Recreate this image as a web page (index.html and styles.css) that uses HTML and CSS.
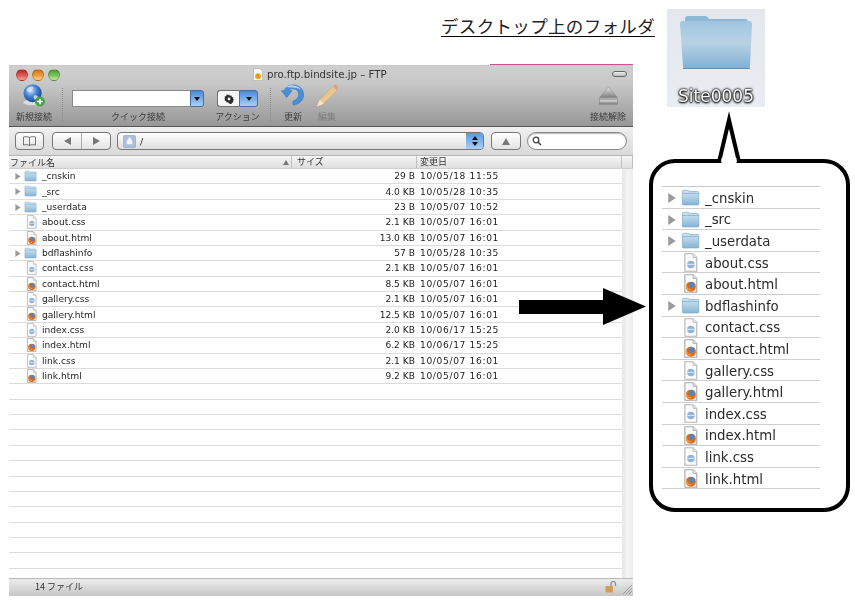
FILE: index.html
```html
<!DOCTYPE html>
<html lang="ja">
<head>
<meta charset="utf-8">
<title>FTP</title>
<link rel="stylesheet" href="styles.css">
</head>
<body>
<svg class="sprite" aria-hidden="true">
  <defs>
    <linearGradient id="fg" x1="0" y1="0" x2="0" y2="1"><stop offset="0" stop-color="#d6e7f2"/><stop offset="1" stop-color="#84b5d6"/></linearGradient>
    <linearGradient id="fbig" x1="0" y1="0" x2="0" y2="1"><stop offset="0" stop-color="#9fc5e0"/><stop offset=".45" stop-color="#b8d2e4"/><stop offset="1" stop-color="#7fb0d3"/></linearGradient>
    <radialGradient id="globe" cx=".4" cy=".35" r=".7"><stop offset="0" stop-color="#cfe4fa"/><stop offset=".5" stop-color="#3e7fd0"/><stop offset="1" stop-color="#123f95"/></radialGradient>
    <linearGradient id="ej" x1="0" y1="0" x2="0" y2="1"><stop offset="0" stop-color="#e4e4e4"/><stop offset="1" stop-color="#7c7c7c"/></linearGradient>
    <symbol id="folder" viewBox="0 0 14 12">
      <path d="M1 1.600C1 1 1.400.7 2 .7h3.200c.5 0 .8.3 1 .9h6.100c.5 0 .8.3.8.8v8.300c0 .5-.3.8-.8.8H1.800c-.5 0-.8-.3-.8-.8z" fill="url(#fg)" stroke="#7ea6c4" stroke-width=".5"/>
      <path d="M1.200 3h11.700" stroke="#7aa8ca" stroke-width=".5"/>
    </symbol>
    <symbol id="css" viewBox="0 0 12 15">
      <path d="M1.500.5h6.500l3 3v11h-9.500z" fill="#fbfbfb" stroke="#b5b5b5" stroke-width=".9"/>
      <path d="M8 .5v3h3" fill="#e6e6e6" stroke="#b5b5b5" stroke-width=".6"/>
      <circle cx="6.300" cy="9" r="3" fill="#8fb4d8"/>
      <path d="M3.300 9h6" stroke="#dfe9f2" stroke-width=".8"/>
    </symbol>
    <symbol id="html" viewBox="0 0 12 15">
      <path d="M1.500.5h6.500l3 3v11h-9.500z" fill="#fbfbfb" stroke="#a8a8a8" stroke-width=".9"/>
      <path d="M8 .5v3h3" fill="#e6e6e6" stroke="#a8a8a8" stroke-width=".6"/>
      <circle cx="6.300" cy="10" r="4" fill="#e56a17"/>
      <circle cx="6.900" cy="8.700" r="2.400" fill="#4f86c4"/>
      <path d="M2.600 9c.3 2.400 2 3.700 4 3.500" stroke="#f6a53a" stroke-width=".9" fill="none"/>
    </symbol>
    <symbol id="doc-title" viewBox="0 0 10 13">
      <path d="M.5.5h6.500l2.500 2.500v9.500h-9z" fill="#f8f8f8" stroke="#aaa" stroke-width=".6"/>
      <circle cx="5" cy="8.200" r="3" fill="#eda81f"/>
      <path d="M4 6.300c1.200.1 2 1 1.800 2.200-.2.800-1.300.9-1.800.4.600 0 1-.2 1-.8s-.8-1-1-1.800z" fill="#c8761a"/>
    </symbol>
    <symbol id="chev" viewBox="0 0 6 8"><path d="M0 0l6 4-6 4z" fill="#9a9a9a"/></symbol>
  </defs>
</svg>

<h1 class="caption">デスクトップ上のフォルダ</h1>

<div class="desktop-tile">
  <svg class="big-folder" viewBox="0 0 74 58">
    <path d="M6 6c0-2 1-3 3-3h17c2 0 3 1 4 3h36c2 0 3 1 3 3v5H6z" fill="#8fb8d8"/>
    <path d="M1 11c0-2 1-3 3-3h66c2 0 3 1 3 3l-2 42c0 2-1 3-3 3H7c-2 0-3-1-3-3z" fill="url(#fbig)"/>
    <path d="M4 55.500h67" stroke="#5f8fb4" stroke-width="1.200"/>
  </svg>
  <span class="tile-label">Site0005</span>
</div>

<main class="window">
  <header class="titlebar">
    <div class="lights"><i class="light red"></i><i class="light amber"></i><i class="light green"></i></div>
    <div class="title"><svg class="title-icon"><use href="#doc-title"/></svg><span>pro.ftp.bindsite.jp – FTP</span></div>
    <i class="pill"></i>
  </header>

  <div class="toolbar">
    <div class="tool tool-new">
      <svg class="tool-icon" viewBox="0 0 26 26">
        <ellipse cx="11" cy="20.500" rx="10" ry="3.500" fill="#ddd" stroke="#999" stroke-width=".5"/>
        <circle cx="11.500" cy="10.500" r="9.800" fill="url(#globe)"/>
        <path d="M5 7c2-3 5-4 7-3 1 2-2 2-2 4s-3 2-5-1zm8 6c2-1 5 0 4 2s-3 3-4 2 0-3 0-4z" fill="#dfeaf6" opacity=".8"/>
        <circle cx="19.500" cy="19.500" r="5.500" fill="#4aa34a"/>
        <path d="M19.500 16.500v6M16.500 19.500h6" stroke="#fff" stroke-width="1.800"/>
      </svg>
      <span>新規接続</span>
    </div>
    <i class="tool-sep sep-a"></i>
    <div class="tool tool-quick">
      <div class="combo"><i class="combo-field"></i><i class="blue-btn"><b class="down"></b></i></div>
      <span>クイック接続</span>
    </div>
    <div class="tool tool-action">
      <div class="action">
        <i class="gear-box">
          <svg class="gear" viewBox="0 0 12 12">
            <path d="M6 .5l1 1.700 1.900-.5.500 1.900 1.900.5-.5 1.900 1.200 1-1.200 1 .5 1.900-1.900.5-.5 1.900-1.900-.5L6 11.500l-1-1.700-1.900.5-.5-1.900-1.900-.5.5-1.900L0 6l1.200-1-.5-1.900 1.900-.5.5-1.900 1.900.5z" fill="#2a2a2a"/>
            <circle cx="6" cy="6" r="1.700" fill="#f4f4f4"/>
          </svg>
        </i>
        <i class="blue-btn wide"><b class="down"></b></i>
      </div>
      <span>アクション</span>
    </div>
    <i class="tool-sep sep-b"></i>
    <div class="tool tool-refresh">
      <svg class="tool-icon" viewBox="0 0 24 26">
        <path d="M12 2C7 2 4 4.500 3 8l-3 0 5.500 7L11 8 7.500 8C8.500 6.500 10 6 12 6c3.500 0 6 2.500 6 6 0 3-2 5.500-6 7l0 4c7-1 11-5.500 11-11C23 6 18 2 12 2z" fill="#4a8fd6" stroke="#2f6fb2" stroke-width=".6"/>
        <path d="M5 4.500C7 2.800 9.500 2.300 12 2.500c4 .2 7 2 8.500 4.500-3-2-8-3-15.500-2.500z" fill="#b4d5f2"/>
      </svg>
      <span>更新</span>
    </div>
    <div class="tool tool-edit">
      <svg class="tool-icon" viewBox="0 0 26 26">
        <path d="M2 25l3-7.500L19.500 3 24 7.500 9.500 22z" fill="#e6c890" stroke="#ba9f70" stroke-width=".6"/>
        <path d="M19.500 3l1.500-1.500c.9-.8 1.900-.7 2.600 0l.9.900c.7.800.7 1.700 0 2.600L24 7.500z" fill="#e59a9a"/>
        <path d="M2 25l3-7.500L9.500 22z" fill="#f2e6d2"/>
      </svg>
      <span class="dim">編集</span>
    </div>
    <div class="tool tool-eject">
      <svg class="eject-icon" viewBox="0 0 22 22">
        <path d="M11 1L21 13H1z" fill="url(#ej)" stroke="#888" stroke-width=".5"/>
        <rect x="1" y="15" width="20" height="5" fill="url(#ej)" stroke="#777" stroke-width=".5"/>
      </svg>
      <span>接続解除</span>
    </div>
  </div>

  <div class="addressbar">
    <button class="btn btn-book" type="button" aria-label="book">
      <svg class="book" viewBox="0 0 14 10"><path d="M7 1.500C5.500.5 3 .5 1 1v8c2-.5 4.500-.5 6 .5 1.500-1 4-1 6-.5V1c-2-.5-4.500-.5-6 .5zM7 1.500v8" fill="none" stroke="#555" stroke-width=".8"/></svg>
    </button>
    <div class="btn nav">
      <span class="nav-half"><i class="tri-left"></i></span>
      <span class="nav-half"><i class="tri-right"></i></span>
    </div>
    <div class="path">
      <svg class="disk" viewBox="0 0 14 14"><rect x=".5" y=".5" width="13" height="13" rx="1.500" fill="#aebfdc" stroke="#8899b8" stroke-width=".6"/><path d="M7 2l3 4.500v3.500H4V6.500z" fill="#f2f5fa"/></svg>
      <span class="path-text">/</span>
      <i class="stepper"><b class="up"></b><b class="down"></b></i>
    </div>
    <button class="btn btn-up" type="button" aria-label="up"><i class="tri-up"></i></button>
    <div class="search">
      <svg class="lens" viewBox="0 0 10 10"><circle cx="4" cy="4" r="2.800" fill="none" stroke="#444" stroke-width="1.300"/><path d="M6 6l3 3" stroke="#444" stroke-width="1.500"/></svg>
    </div>
  </div>

  <div class="headers">
    <div class="col-h h-name"><span>ファイル名</span><i class="sort"></i></div>
    <div class="col-h h-size">サイズ</div>
    <div class="col-h h-date">変更日</div>
    <div class="col-h h-end"></div>
  </div>

  <div class="content">
    <div class="rows">
      <div class="row"><svg class="chev"><use href="#chev"/></svg><svg class="ic-folder"><use href="#folder"/></svg><span class="name">_cnskin</span><span class="size">29 B</span><span class="date">10/05/18 11:55</span></div>
      <div class="row"><svg class="chev"><use href="#chev"/></svg><svg class="ic-folder"><use href="#folder"/></svg><span class="name">_src</span><span class="size">4.0 KB</span><span class="date">10/05/28 10:35</span></div>
      <div class="row"><svg class="chev"><use href="#chev"/></svg><svg class="ic-folder"><use href="#folder"/></svg><span class="name">_userdata</span><span class="size">23 B</span><span class="date">10/05/07 10:52</span></div>
      <div class="row"><svg class="ic-file"><use href="#css"/></svg><span class="name">about.css</span><span class="size">2.1 KB</span><span class="date">10/05/07 16:01</span></div>
      <div class="row"><svg class="ic-file"><use href="#html"/></svg><span class="name">about.html</span><span class="size">13.0 KB</span><span class="date">10/05/07 16:01</span></div>
      <div class="row"><svg class="chev"><use href="#chev"/></svg><svg class="ic-folder"><use href="#folder"/></svg><span class="name">bdflashinfo</span><span class="size">57 B</span><span class="date">10/05/28 10:35</span></div>
      <div class="row"><svg class="ic-file"><use href="#css"/></svg><span class="name">contact.css</span><span class="size">2.1 KB</span><span class="date">10/05/07 16:01</span></div>
      <div class="row"><svg class="ic-file"><use href="#html"/></svg><span class="name">contact.html</span><span class="size">8.5 KB</span><span class="date">10/05/07 16:01</span></div>
      <div class="row"><svg class="ic-file"><use href="#css"/></svg><span class="name">gallery.css</span><span class="size">2.1 KB</span><span class="date">10/05/07 16:01</span></div>
      <div class="row"><svg class="ic-file"><use href="#html"/></svg><span class="name">gallery.html</span><span class="size">12.5 KB</span><span class="date">10/05/07 16:01</span></div>
      <div class="row"><svg class="ic-file"><use href="#css"/></svg><span class="name">index.css</span><span class="size">2.0 KB</span><span class="date">10/06/17 15:25</span></div>
      <div class="row"><svg class="ic-file"><use href="#html"/></svg><span class="name">index.html</span><span class="size">6.2 KB</span><span class="date">10/06/17 15:25</span></div>
      <div class="row"><svg class="ic-file"><use href="#css"/></svg><span class="name">link.css</span><span class="size">2.1 KB</span><span class="date">10/05/07 16:01</span></div>
      <div class="row"><svg class="ic-file"><use href="#html"/></svg><span class="name">link.html</span><span class="size">9.2 KB</span><span class="date">10/05/07 16:01</span></div>
      <div class="row"></div><div class="row"></div><div class="row"></div><div class="row"></div><div class="row"></div><div class="row"></div><div class="row"></div><div class="row"></div><div class="row"></div><div class="row"></div><div class="row"></div><div class="row"></div><div class="row"></div>
    </div>
    <div class="scroll"></div>
  </div>

  <footer class="statusbar">
    <span class="count">14 ファイル</span>
    <svg class="lock" viewBox="0 0 12 12"><path d="M6 5V3c0-1.500 1-2.500 2.300-2.500S10.500 1.500 10.500 3v2" fill="none" stroke="#8c8c8c" stroke-width="1.200"/><rect x=".5" y="5" width="7.500" height="6.500" rx=".8" fill="#d39d55"/></svg>
    <svg class="grip" viewBox="0 0 10 10"><path d="M10 1L1 10M10 4L4 10M10 7L7 10" stroke="#8f8f8f" stroke-width=".8"/></svg>
  </footer>
</main>

<svg class="arrow" viewBox="0 0 127 37"><path d="M0 12h84V0l43 18.500L84 37V26H0z" fill="#000"/></svg>

<svg class="tail" viewBox="0 0 34 54"><path d="M6 53L16 11l10 42" fill="#fff" stroke="#000" stroke-width="4" stroke-miterlimit="10"/><path d="M8.500 49h15v5h-15z" fill="#fff"/></svg>

<section class="bubble">
  <div class="list">
    <div class="item"><svg class="chev-l"><use href="#chev"/></svg><svg class="if-l"><use href="#folder"/></svg><span>_cnskin</span></div>
    <div class="item"><svg class="chev-l"><use href="#chev"/></svg><svg class="if-l"><use href="#folder"/></svg><span>_src</span></div>
    <div class="item"><svg class="chev-l"><use href="#chev"/></svg><svg class="if-l"><use href="#folder"/></svg><span>_userdata</span></div>
    <div class="item"><svg class="id-l"><use href="#css"/></svg><span>about.css</span></div>
    <div class="item"><svg class="id-l"><use href="#html"/></svg><span>about.html</span></div>
    <div class="item"><svg class="chev-l"><use href="#chev"/></svg><svg class="if-l"><use href="#folder"/></svg><span>bdflashinfo</span></div>
    <div class="item"><svg class="id-l"><use href="#css"/></svg><span>contact.css</span></div>
    <div class="item"><svg class="id-l"><use href="#html"/></svg><span>contact.html</span></div>
    <div class="item"><svg class="id-l"><use href="#css"/></svg><span>gallery.css</span></div>
    <div class="item"><svg class="id-l"><use href="#html"/></svg><span>gallery.html</span></div>
    <div class="item"><svg class="id-l"><use href="#css"/></svg><span>index.css</span></div>
    <div class="item"><svg class="id-l"><use href="#html"/></svg><span>index.html</span></div>
    <div class="item"><svg class="id-l"><use href="#css"/></svg><span>link.css</span></div>
    <div class="item"><svg class="id-l"><use href="#html"/></svg><span>link.html</span></div>
  </div>
</section>
</body>
</html>
```

FILE: styles.css
```css
* { box-sizing: border-box; }
html, body { margin: 0; padding: 0; }
body {
  width: 855px;
  height: 600px;
  position: relative;
  overflow: hidden;
  background: #fff;
  font-family: "DejaVu Sans", "Noto Sans CJK JP", sans-serif;
  color: #222;
}
i { font-style: normal; display: block; }
.sprite { position: absolute; width: 0; height: 0; }

/* annotation canvas */
.caption {
  position: absolute;
  left: 441px;
  top: 15px;
  margin: 0;
  font: 400 17.500px/21px "Noto Sans CJK JP", sans-serif;
  letter-spacing: .33px;
  color: #222;
  border-bottom: 1px solid #000;
  height: 22px;
  white-space: nowrap;
}
.desktop-tile {
  position: absolute;
  left: 667px;
  top: 9px;
  width: 98px;
  height: 98px;
  background: linear-gradient(#e4e8ee, #e9ecf0);
  display: flex;
  flex-direction: column;
  align-items: center;
  filter: blur(.4px);
  overflow: hidden;
}
.big-folder { width: 74px; height: 58px; margin-top: 4px; flex: none; }
.tile-label {
  margin-top: 15px;
  font: 400 17px/20px "DejaVu Sans", sans-serif;
  color: #fff;
  white-space: nowrap;
  text-shadow: 0 0 2px #000, 0 1px 2px #000, 0 0 3px #222, 0 0 1px #000;
}
.arrow { position: absolute; left: 519px; top: 288px; width: 127px; height: 37px; }
.tail { position: absolute; left: 713px; top: 109px; width: 34px; height: 54px; z-index: 2; }
.bubble {
  position: absolute;
  left: 649px;
  top: 159px;
  width: 201px;
  height: 353px;
  border: 4px solid #000;
  border-radius: 26px;
  background: #fff;
  padding: 23px 26px 0 9px;
}
.list { border-top: 1px solid #c9c9c9; filter: blur(.35px); }
.item {
  height: 21.600px;
  display: flex;
  align-items: center;
  border-bottom: 1px solid #cfcfcf;
  font-size: 13.300px;
  color: #2b2b2b;
  padding-left: 43px;
  position: relative;
}
.item span { line-height: 20px; padding-top: 3px; }
.chev-l { position: absolute; left: 6px; top: 6px; width: 8px; height: 10px; }
.if-l { position: absolute; left: 19px; top: 2px; width: 19px; height: 17px; }
.id-l { position: absolute; left: 21px; top: 1px; width: 15px; height: 19px; }

/* window */
.window {
  position: absolute;
  left: 9px;
  top: 65px;
  width: 624px;
  height: 531px;
  display: flex;
  flex-direction: column;
  border-top: 1px solid #c9c9c9;
  background: #fff;
  filter: blur(.35px);
}
.window::before {
  content: "";
  position: absolute;
  left: 481px;
  right: 0;
  top: -2px;
  height: 1px;
  background: #c4559b;
}
.titlebar {
  height: 17px;
  flex: none;
  display: flex;
  align-items: center;
  position: relative;
  background: linear-gradient(#cfcfcf, #c8c8c8);
}
.lights { display: flex; gap: 4px; margin-left: 7px; }
.light { width: 12px; height: 12px; border-radius: 50%; border: 1px solid rgba(0,0,0,.2); }
.red { background: linear-gradient(#b92b2b, #e25a55 55%, #f5a7a0); }
.amber { background: linear-gradient(#c9741a, #ef9d3c 55%, #f9d28e); }
.green { background: linear-gradient(#4d9a32, #7dc45a 55%, #c4eca4); }
.title {
  position: absolute;
  left: 244px;
  top: 1px;
  display: flex;
  align-items: center;
  gap: 4px;
  font-size: 10.200px;
  line-height: 15px;
  color: #333;
  white-space: nowrap;
}
.title-icon { width: 10px; height: 13px; }
.pill {
  position: absolute;
  right: 6px;
  top: 5px;
  width: 15px;
  height: 6px;
  border-radius: 3px;
  border: 1px solid #666;
  background: linear-gradient(#eee, #bbb);
}
.toolbar {
  height: 44px;
  flex: none;
  display: flex;
  align-items: stretch;
  background: linear-gradient(#c8c8c8, #979797);
  border-bottom: 1px solid #555;
}
.tool {
  display: flex;
  flex-direction: column;
  align-items: center;
  justify-content: flex-end;
  font-size: 9px;
  line-height: 11px;
  color: #3c3c3c;
  white-space: nowrap;
  padding-bottom: 4px;
  font-family: "Noto Sans CJK JP", sans-serif;
}
.tool-icon { width: 24px; height: 25px; margin-bottom: 3px; }
.dim { color: #7d7d7d; }
.tool-new { width: 38px; margin-left: 6px; }
.tool-sep { width: 1px; margin: 5px 0 5px; border-left: 1px dotted #8a8a8a; }
.sep-a { margin-left: 9px; margin-right: 9px; }
.sep-b { margin-left: 12px; margin-right: 10px; }
.tool-quick { width: 132px; }
.combo { display: flex; height: 17px; width: 132px; margin-bottom: 4px; }
.combo-field { width: 118px; background: #fff; border: 1px solid #8a8a8a; border-right: 0; }
.blue-btn {
  width: 14px;
  background: linear-gradient(#4a8ad8, #a8d0f4);
  border: 1px solid #4a6e9c;
  border-radius: 0 3px 3px 0;
  display: flex;
  align-items: center;
  justify-content: center;
}
.blue-btn.wide { width: 19px; }
.down { display: block; width: 0; height: 0; border: 3px solid transparent; border-top: 4px solid #111; border-bottom: 0; }
.up { display: block; width: 0; height: 0; border: 3px solid transparent; border-bottom: 4px solid #111; border-top: 0; }
.tool-action { width: 41px; margin-left: 13px; }
.action { display: flex; height: 17px; width: 41px; margin-bottom: 4px; }
.gear-box {
  flex: 1;
  background: #f6f6f6;
  border: 1px solid #6f6f6f;
  border-right: 0;
  border-radius: 3px 0 0 3px;
  display: flex;
  align-items: center;
  justify-content: center;
}
.gear { width: 10px; height: 10px; }
.tool-refresh { width: 24px; }
.tool-edit { width: 24px; margin-left: 10px; }
.tool-eject { width: 36px; margin-left: auto; margin-right: 7px; }
.eject-icon { width: 21px; height: 20px; margin-bottom: 5px; }

.addressbar {
  height: 29px;
  flex: none;
  display: flex;
  align-items: center;
  padding-left: 6px;
  background: linear-gradient(#f0f0f0, #d9d9d9);
  border-bottom: 1px solid #b5b5b5;
}
.btn {
  height: 18px;
  padding: 0;
  border: 1px solid #777;
  border-radius: 4px;
  background: linear-gradient(#fff, #e3e3e3);
  display: flex;
  align-items: center;
  justify-content: center;
}
.btn-book { width: 29px; }
.book { width: 15px; height: 10px; }
.nav { width: 59px; margin-left: 8px; }
.nav-half { flex: 1; height: 100%; display: flex; align-items: center; justify-content: center; }
.nav-half + .nav-half { border-left: 1px solid #aaa; }
.tri-left { border: 4px solid transparent; border-right: 7px solid #777; border-left: 0; }
.tri-right { border: 4px solid transparent; border-left: 7px solid #777; border-right: 0; }
.tri-up { border: 4px solid transparent; border-bottom: 7px solid #777; border-top: 0; }
.path {
  width: 367px;
  height: 18px;
  margin-left: 6px;
  display: flex;
  align-items: center;
  border: 1px solid #777;
  border-radius: 4px;
  background: linear-gradient(#fff, #dedede);
  padding-left: 5px;
  font-size: 9.500px;
}
.disk { width: 13px; height: 13px; }
.path-text { margin-left: 4px; }
.stepper {
  margin-left: auto;
  width: 17px;
  height: 100%;
  background: linear-gradient(#5a98e0, #a8d0f4);
  border-radius: 0 3px 3px 0;
  display: flex;
  flex-direction: column;
  align-items: center;
  justify-content: center;
  gap: 2px;
}
.btn-up { width: 30px; margin-left: 7px; }
.search {
  width: 100px;
  height: 18px;
  margin-left: 6px;
  border: 1px solid #8a8a8a;
  border-radius: 9px;
  background: #fff;
  box-shadow: inset 0 1px 1px #bbb;
  display: flex;
  align-items: center;
  padding-left: 4px;
}
.lens { width: 10px; height: 10px; }

.headers {
  height: 13px;
  flex: none;
  display: grid;
  grid-template-columns: 283px 125px 205px 11px;
  background: linear-gradient(#f6f6f6, #dedede);
  border-bottom: 1px solid #cfcfcf;
  font: 400 9px/11px "Noto Sans CJK JP", sans-serif;
  color: #333;
}
.col-h { border-right: 1px solid #c0c0c0; white-space: nowrap; }
.h-size { padding-left: 5px; }
.h-date { padding-left: 3px; }
.h-name { display: flex; justify-content: space-between; align-items: center; padding: 0 1px; }
.sort { border: 3px solid transparent; border-bottom: 5px solid #777; border-top: 0; margin-right: 1px; }

.content { flex: 1; display: flex; min-height: 0; overflow: hidden; }
.rows { flex: 1; min-width: 0; }
.scroll { width: 11px; background: linear-gradient(90deg, #e6e6e6, #f4f4f4 50%, #ececec); }
.row {
  height: 15.380px;
  display: grid;
  grid-template-columns: 33px 160px 213px 1fr;
  align-items: center;
  border-bottom: 1px solid #dcdcdc;
  position: relative;
  font-size: 9.100px;
  line-height: 14px;
  color: #222;
}
.chev { position: absolute; left: 6px; top: 4px; width: 6px; height: 7px; }
.ic-folder { position: absolute; left: 15px; top: 1px; width: 13px; height: 12px; }
.ic-file { position: absolute; left: 17px; top: 0; width: 11px; height: 14px; }
.name { grid-column: 2; }
.size { grid-column: 3; text-align: right; }
.date { grid-column: 4; padding-left: 5px; white-space: nowrap; letter-spacing: .65px; }
.statusbar {
  height: 18px;
  flex: none;
  display: flex;
  align-items: center;
  padding: 0 0 2px 26px;
  background: linear-gradient(#ececec, #c6c6c6);
  border-top: 1px solid #b8b8b8;
  font: 400 9px/12px "Noto Sans CJK JP", sans-serif;
  color: #333;
}
.lock { width: 12px; height: 12px; margin-left: auto; }
.grip { width: 10px; height: 10px; margin: 5px 1px 0 5px; }
```
